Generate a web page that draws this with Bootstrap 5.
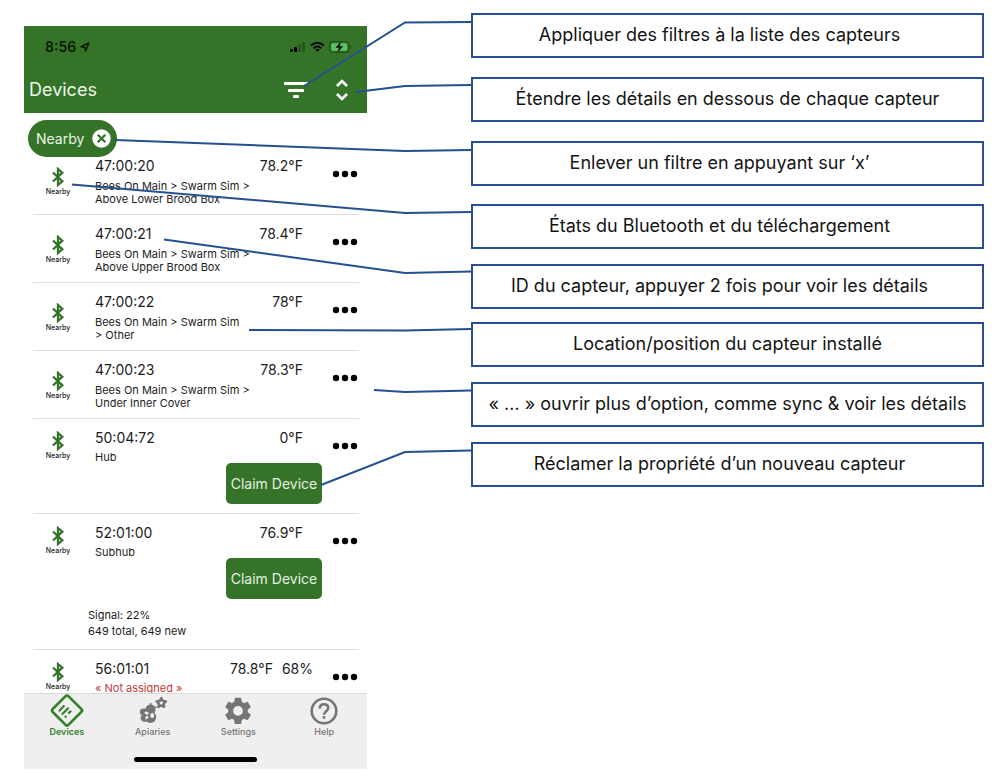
<!DOCTYPE html>
<html lang="fr">
<head>
<meta charset="utf-8">
<meta name="viewport" content="width=device-width, initial-scale=1">
<title>Liste des capteurs</title>
<link href="https://cdn.jsdelivr.net/npm/bootstrap@5.3.0/dist/css/bootstrap.min.css" rel="stylesheet">
<style>
  :root { --leaf: #357428; --ink: #1c1c1c; --navy: #26508f; }
  body { font-family: "Inter", "Liberation Sans", sans-serif; color: var(--ink); background: #fff; }
  svg { display: block; }
  .guide { display: grid; grid-template-columns: minmax(0, 343fr) minmax(0, 104fr) minmax(0, 513fr); margin: 13px 24px 8px; }
  .phone { margin-top: 13px; }
  .topbar { background: var(--leaf); height: 87px; }
  .statusbar { height: 41px; padding: 0 15px 0 21px; color: #0b1a08; font-size: 14px; font-weight: 600; }
  .toolbar { height: 46px; padding: 0 16px 0 5px; color: #fff; }
  .toolbar h1 { font-size: 18px; font-weight: 400; line-height: 24px; color: #eef5ec; }
  .icon-btn { background: none; border: 0; padding: 0; color: inherit; }
  .chips { height: 34px; padding: 7px 4px 0; position: relative; z-index: 1; }
  .chip { background: var(--leaf); color: #e9f3e6; height: 37px; border-radius: 19px; padding: 0 6px 0 8px; font-size: 14px; gap: 8px; }
  .devices { height: 546px; overflow: hidden; padding: 0 8px 0 9px; }
  .device { display: grid; grid-template-columns: 55px minmax(0, 1fr) 37px; min-height: 68px; border-bottom: 1px solid #dedede; padding-top: 9px; }
  .claimable { min-height: 95px; }
  .detailed { min-height: 136px; }
  .radio-state { width: 50px; padding-top: 11px; font-size: 7px; line-height: 10px; font-weight: 500; color: var(--leaf); }
  .radio-state span { color: var(--ink); }
  .compact .radio-state { padding-top: 3px; }
  .ident { padding-left: 7px; width: 165px; }
  .ident h2, .reading { font-size: 14px; line-height: 20px; font-weight: 400; margin: 0; white-space: nowrap; }
  .place { font-size: 11px; line-height: 13px; margin: 4px 0 0; white-space: nowrap; }
  .compact .place { margin-top: 3px; }
  .unassigned { color: #c23a3a; }
  .reading { padding-right: 19px; }
  .reading-pair { padding-right: 9px; gap: 9px; }
  .claim { background: var(--leaf); color: #e4f0e1; border: 0; border-radius: 5px; height: 41px; width: 96px; margin-top: 15px; padding: 0; font-size: 14px; white-space: nowrap; }
  .stats { font-size: 11px; line-height: 16px; margin: 8px 0 0; }
  .more { height: 36px; padding-left: 10px; }
  .tabbar { background: #efefef; border-top: 1px solid #d9d9d9; height: 76px; }
  .tab-link { color: #757575; font-size: 9px; line-height: 10px; font-weight: 500; text-decoration: none; }
  .tab-link svg { height: 33px; }
  .tab-link.current { color: #338029; font-weight: 600; }
  .home-bar { width: 123px; height: 5px; border-radius: 3px; background: #000; margin: 20px auto 0; }
  .notes { list-style: none; grid-column: 3; }
  .note { border: 2px solid var(--navy); height: 45px; font-size: 18px; padding-bottom: 3px; margin-bottom: 15px; white-space: nowrap; color: #141414; }
  .note.spaced { margin-bottom: 19px; }
  .note.roomy { margin-bottom: 18px; }
  .note.tight { margin-bottom: 13px; }
  .note.shifted { padding-right: 16px; }
  .leaders { position: absolute; inset: 0; pointer-events: none; z-index: 2; overflow: visible; }
  .leaders polyline { fill: none; stroke: var(--navy); stroke-width: 2; vector-effect: non-scaling-stroke; }
</style>
</head>
<body>
<svg width="0" height="0" class="position-absolute" aria-hidden="true">
  <symbol id="bt" viewBox="0 0 14 20"><path d="M2 5.500 11.300 14.300 7 18V2L11.300 5.700 2 14.500" fill="none" stroke="currentColor" stroke-width="2.300"/></symbol>
  <symbol id="dots" viewBox="0 0 26 8"><circle cx="4" cy="4" r="3.200"/><circle cx="13" cy="4" r="3.200"/><circle cx="22" cy="4" r="3.200"/></symbol>
</svg>

<main class="guide position-relative">
  <section class="phone" aria-label="Devices">
    <header class="topbar">
      <div class="statusbar d-flex align-items-center justify-content-between">
        <div class="d-flex align-items-center gap-1"><span>8:56</span>
          <svg width="10" height="10" viewBox="0 0 10 10"><path d="M1 4.700 9 1 5.500 9.200 5 5.200Z" fill="none" stroke="currentColor" stroke-width="1.400" stroke-linejoin="round"/></svg>
        </div>
        <div class="d-flex align-items-center gap-1">
          <svg width="17" height="12" viewBox="0 0 17 12"><rect x="1" y="8" width="3" height="3" rx="1"/><rect x="5" y="6" width="3" height="5" rx="1"/><g opacity=".25"><rect x="9" y="3" width="3" height="8" rx="1"/><rect x="13" y="1" width="3" height="10" rx="1"/></g></svg>
          <svg width="15" height="12" viewBox="0 0 15 12" fill="none" stroke="#0a0a0a" stroke-width="2"><path d="M1 4.600Q7.500-1.200 14 4.600M3.500 7.300Q7.500 3.800 11.500 7.300"/><path d="M5.300 8.700Q7.500 7 9.700 8.700L7.500 11Z" fill="#0a0a0a" stroke="none"/></svg>
          <svg width="23" height="12" viewBox="0 0 23 12"><rect x=".7" y=".7" width="19" height="10.600" rx="3" fill="none" stroke="#24501b" stroke-width="1.200"/><rect x="2.200" y="2.200" width="16" height="7.600" rx="1.500" fill="#56c466"/><path d="M21.200 4v4q1.200-.6 1.200-2T21.200 4Z" fill="#24501b"/><path d="M11.800.6 6.500 6.700h3.300L8.600 11.400 14.200 5.300h-3.400Z" fill="#071006"/></svg>
        </div>
      </div>
      <div class="toolbar d-flex align-items-center justify-content-between">
        <h1 class="m-0">Devices</h1>
        <div class="d-flex align-items-center gap-4">
          <button class="icon-btn" type="button" aria-label="Filter"><svg width="26" height="20" viewBox="0 0 26 20" fill="currentColor"><rect x="1" y="2" width="24" height="3" rx="1"/><rect x="5" y="9" width="16" height="3" rx="1"/><rect x="10" y="15" width="6" height="3" rx="1"/></svg></button>
          <button class="icon-btn" type="button" aria-label="Expand"><svg width="18" height="24" viewBox="0 0 18 24" fill="none" stroke="currentColor" stroke-width="2.600"><path d="M4 8 9 3l5 5M4 16l5 5 5-5"/></svg></button>
        </div>
      </div>
    </header>

    <div class="chips">
      <button type="button" class="chip icon-btn d-inline-flex align-items-center">Nearby
        <svg width="19" height="19" viewBox="0 0 19 19"><circle cx="9.500" cy="9.500" r="9.200" fill="#fff"/><path d="m5.700 5.700 7.600 7.600m0-7.600-7.600 7.600" stroke="#357428" stroke-width="2.300"/></svg>
      </button>
    </div>

    <div class="devices">
      <article class="device">
        <div class="radio-state d-flex flex-column align-items-center"><svg width="14" height="20"><use href="#bt"/></svg><span>Nearby</span></div>
        <div class="d-flex justify-content-between"><div class="ident"><h2>47:00:20</h2><p class="place">Bees On Main &gt; Swarm Sim &gt;<br>Above Lower Brood Box</p></div><div class="reading">78.2°F</div></div>
        <button type="button" class="icon-btn more" aria-label="More"><svg width="26" height="8"><use href="#dots"/></svg></button>
      </article>
      <article class="device">
        <div class="radio-state d-flex flex-column align-items-center"><svg width="14" height="20"><use href="#bt"/></svg><span>Nearby</span></div>
        <div class="d-flex justify-content-between"><div class="ident"><h2>47:00:21</h2><p class="place">Bees On Main &gt; Swarm Sim &gt;<br>Above Upper Brood Box</p></div><div class="reading">78.4°F</div></div>
        <button type="button" class="icon-btn more" aria-label="More"><svg width="26" height="8"><use href="#dots"/></svg></button>
      </article>
      <article class="device">
        <div class="radio-state d-flex flex-column align-items-center"><svg width="14" height="20"><use href="#bt"/></svg><span>Nearby</span></div>
        <div class="d-flex justify-content-between"><div class="ident"><h2>47:00:22</h2><p class="place">Bees On Main &gt; Swarm Sim<br>&gt; Other</p></div><div class="reading">78°F</div></div>
        <button type="button" class="icon-btn more" aria-label="More"><svg width="26" height="8"><use href="#dots"/></svg></button>
      </article>
      <article class="device">
        <div class="radio-state d-flex flex-column align-items-center"><svg width="14" height="20"><use href="#bt"/></svg><span>Nearby</span></div>
        <div class="d-flex justify-content-between"><div class="ident"><h2>47:00:23</h2><p class="place">Bees On Main &gt; Swarm Sim &gt;<br>Under Inner Cover</p></div><div class="reading">78.3°F</div></div>
        <button type="button" class="icon-btn more" aria-label="More"><svg width="26" height="8"><use href="#dots"/></svg></button>
      </article>
      <article class="device compact claimable">
        <div class="radio-state d-flex flex-column align-items-center"><svg width="14" height="20"><use href="#bt"/></svg><span>Nearby</span></div>
        <div class="d-flex justify-content-between"><div class="ident flex-shrink-1"><h2>50:04:72</h2><p class="place">Hub</p></div><div class="d-flex flex-column align-items-end"><div class="reading">0°F</div><button type="button" class="claim">Claim Device</button></div></div>
        <button type="button" class="icon-btn more" aria-label="More"><svg width="26" height="8"><use href="#dots"/></svg></button>
      </article>
      <article class="device compact detailed">
        <div class="radio-state d-flex flex-column align-items-center"><svg width="14" height="20"><use href="#bt"/></svg><span>Nearby</span></div>
        <div><div class="d-flex justify-content-between"><div class="ident flex-shrink-1"><h2>52:01:00</h2><p class="place">Subhub</p></div><div class="d-flex flex-column align-items-end"><div class="reading">76.9°F</div><button type="button" class="claim">Claim Device</button></div></div>
          <p class="stats">Signal: 22%<br>649 total, 649 new</p></div>
        <button type="button" class="icon-btn more" aria-label="More"><svg width="26" height="8"><use href="#dots"/></svg></button>
      </article>
      <article class="device compact">
        <div class="radio-state d-flex flex-column align-items-center"><svg width="14" height="20"><use href="#bt"/></svg><span>Nearby</span></div>
        <div class="d-flex justify-content-between"><div class="ident flex-shrink-1"><h2>56:01:01</h2><p class="place unassigned">« Not assigned »</p></div><div class="reading reading-pair d-flex"><span>78.8°F</span><span>68%</span></div></div>
        <button type="button" class="icon-btn more" aria-label="More"><svg width="26" height="8"><use href="#dots"/></svg></button>
      </article>
    </div>

    <footer class="tabbar">
      <nav class="row row-cols-4 g-0 text-center">
        <a href="#" class="col tab-link current d-flex flex-column align-items-center"><svg width="36" height="33" viewBox="0 0 36 34"><rect x="6.500" y="5.500" width="23" height="23" rx="2" transform="rotate(45 18 17)" fill="none" stroke="currentColor" stroke-width="2.800"/><path d="m9.700 17.700 5.600-6M12.700 21.200l7-7M15.800 24.200l1.600-1.600M19.300 20.200l3-3" stroke="currentColor" stroke-width="2.200"/></svg>Devices</a>
        <a href="#" class="col tab-link d-flex flex-column align-items-center"><svg width="30" height="33" viewBox="0 0 30 33"><g fill="currentColor"><circle cx="12.500" cy="15.500" r="5"/><ellipse cx="5.800" cy="18" rx="4" ry="3.400"/><ellipse cx="7" cy="24" rx="4.500" ry="3.800"/><ellipse cx="12.500" cy="23" rx="5.700" ry="6"/></g><g fill="#efefef"><ellipse cx="8.600" cy="19" rx="2.200" ry="1.400" transform="rotate(20 8.600 19)"/><ellipse cx="8.800" cy="23.500" rx="1.300" ry="2" transform="rotate(35 8.800 23.500)"/><ellipse cx="14.200" cy="21.500" rx="2" ry="2.500"/></g><path d="m13 11-.5-2M16.500 13.500l2-.5" stroke="currentColor" stroke-width="1.500"/><path d="m23.300 4 1.500 2.900 3.200.5-2.300 2.300.5 3.200-2.900-1.500-2.900 1.500.5-3.200-2.300-2.300 3.200-.5Z" fill="none" stroke="currentColor" stroke-width="2.400" stroke-linejoin="round"/></svg>Apiaries</a>
        <a href="#" class="col tab-link d-flex flex-column align-items-center"><svg width="34" height="33" viewBox="-.5 -.3 25 24"><path fill="currentColor" d="M19.140 12.940c.04-.3.060-.61.060-.94s-.02-.64-.07-.94l2.030-1.580c.18-.14.230-.41.120-.61l-1.920-3.320c-.12-.22-.37-.29-.59-.22l-2.390.96c-.5-.38-1.030-.7-1.620-.94L14.400 2.810c-.04-.24-.24-.41-.48-.41h-3.840c-.24 0-.43.17-.47.41l-.36 2.540c-.59.24-1.130.57-1.620.94l-2.390-.96c-.22-.08-.47 0-.59.22L2.740 8.870c-.12.21-.08.470.12.610l2.030 1.580c-.05.3-.09.630-.09.940s.02.640.070.940l-2.030 1.580c-.18.14-.23.41-.12.610l1.920 3.320c.12.220.37.290.59.220l2.390-.96c.5.380 1.030.7 1.620.940l.36 2.540c.05.240.24.410.48.410h3.840c.24 0 .44-.17.470-.41l.36-2.540c.59-.24 1.130-.56 1.620-.94l2.390.96c.22.080.47 0 .59-.22l1.920-3.320c.12-.22.070-.47-.12-.61ZM12 15.600A3.600 3.600 0 1 1 12 8.400a3.600 3.600 0 0 1 0 7.200Z"/></svg>Settings</a>
        <a href="#" class="col tab-link d-flex flex-column align-items-center"><svg width="30" height="33" viewBox="0 0 30 33" fill="none" stroke="currentColor" stroke-width="2.600"><circle cx="15" cy="17" r="12.300"/><path d="M10.800 14.500q0-4.200 4.200-4.200t4.200 3.800c0 3-4.200 3.200-4.200 6.600M15 22v2.800"/></svg>Help</a>
      </nav>
      <div class="home-bar"></div>
    </footer>
  </section>

  <ul class="notes m-0 p-0">
    <li class="note spaced shifted d-flex align-items-center justify-content-center">Appliquer des filtres à la liste des capteurs</li>
    <li class="note spaced d-flex align-items-center justify-content-center">Étendre les détails en dessous de chaque capteur</li>
    <li class="note roomy shifted d-flex align-items-center justify-content-center">Enlever un filtre en appuyant sur ‘x’</li>
    <li class="note shifted d-flex align-items-center justify-content-center">États du Bluetooth et du téléchargement</li>
    <li class="note tight shifted d-flex align-items-center justify-content-center">ID du capteur, appuyer 2 fois pour voir les détails</li>
    <li class="note d-flex align-items-center justify-content-center">Location/position du capteur installé</li>
    <li class="note d-flex align-items-center justify-content-center">« … » ouvrir plus d’option, comme sync &amp; voir les détails</li>
    <li class="note shifted d-flex align-items-center justify-content-center">Réclamer la propriété d’un nouveau capteur</li>
  </ul>

  <svg class="leaders w-100 h-100" viewBox="0 0 960 756" preserveAspectRatio="none" aria-hidden="true">
    <polyline points="280,73 381,9.500 447,9"/>
    <polyline points="332,79 381,73 447,72"/>
    <polyline points="91,127 381,138 447,137"/>
    <polyline points="48,171.500 381,200 447,199"/>
    <polyline points="140,226.500 381,260 447,258.500"/>
    <polyline points="225,317 381,317.500 447,316"/>
    <polyline points="350,377 381,379 447,377.500"/>
    <polyline points="297,472 381,439 447,437.500"/>
  </svg>
</main>
<script src="https://cdn.jsdelivr.net/npm/bootstrap@5.3.0/dist/js/bootstrap.bundle.min.js"></script>
</body>
</html>
